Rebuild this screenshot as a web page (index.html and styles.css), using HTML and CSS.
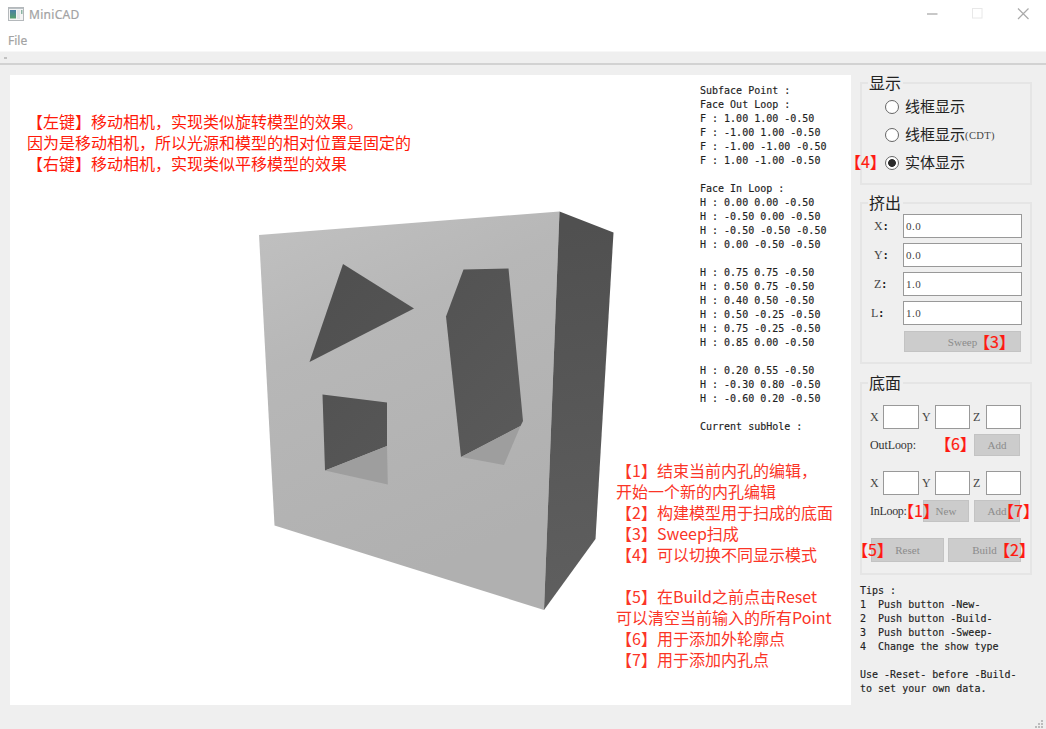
FILE: index.html
```html
<!DOCTYPE html>
<html lang="zh-CN">
<head>
<meta charset="utf-8">
<title>MiniCAD</title>
<link rel="stylesheet" href="styles.css">
</head>
<body>
<div class="window">
  <header class="titlebar">
    <svg class="app-icon" width="16" height="14" viewBox="0 0 16 14">
      <defs><linearGradient id="ico" x1="0" y1="0" x2="0" y2="1"><stop offset="0" stop-color="#4a7fa5"/><stop offset="1" stop-color="#55a06c"/></linearGradient></defs>
      <rect x=".5" y=".5" width="15" height="13" fill="#f4f4f4" stroke="#b4b8bb"/>
      <path d="M1 1.5h14" stroke="#b9c0c4"/>
      <rect x="2" y="3" width="6" height="8.500" fill="url(#ico)"/>
      <rect x="9" y="3" width="3" height="9" fill="#e2e5e7"/>
      <rect x="13" y="3" width="1.500" height="4" fill="#8bb5a4"/>
    </svg>
    <span class="app-name">MiniCAD</span>
    <svg class="controls" width="102" height="14" viewBox="0 0 102 14" fill="none">
      <path d="M0 7h10.500" stroke="#aaa" stroke-width="1.300"/>
      <rect x="45.500" y="1.500" width="9.500" height="9.500" stroke="#e8e8e8"/>
      <path d="M91 1.500l10.500 10.500M101.500 1.500L91 12" stroke="#aaa" stroke-width="1.200"/>
    </svg>
  </header>
  <nav class="menubar">File</nav>
  <div class="toolbar"><i class="handle"></i></div>
  <main class="main">
    <section class="viewport">
      <svg class="model" width="841" height="631" viewBox="10 75 841 631">
        <defs>
          <linearGradient id="front" gradientUnits="userSpaceOnUse" x1="270" y1="220" x2="430" y2="570"><stop offset="0" stop-color="#c0c0c0"/><stop offset=".35" stop-color="#b7b7b7"/><stop offset="1" stop-color="#b0b0b0"/></linearGradient>
          <linearGradient id="side" gradientUnits="userSpaceOnUse" x1="550" y1="230" x2="600" y2="580"><stop offset="0" stop-color="#505050"/><stop offset="1" stop-color="#5e5e5e"/></linearGradient>
          <linearGradient id="hole" gradientUnits="userSpaceOnUse" x1="320" y1="270" x2="510" y2="460"><stop offset="0" stop-color="#4f4f4f"/><stop offset="1" stop-color="#5a5a5a"/></linearGradient>
        </defs>
        <path fill="url(#front)" d="M259 235L559.500 211.500L544 610L274.500 525.500z"/>
        <path fill="url(#side)" d="M559.500 211.500L613.500 232.500L595.500 539L544 610z"/>
        <path fill="url(#hole)" d="M343 264L414 308.500L309.500 362z"/>
        <path fill="url(#hole)" d="M322.500 394.500L387 402.500L387 446L325 470.500z"/>
        <path fill="#9e9e9e" d="M325 470.500L387 446L387.800 484.500z"/>
        <path fill="url(#hole)" d="M463.500 269.500L508.500 268.500L523 421L520.500 426L461 457L446 316.500z"/>
        <path fill="#9e9e9e" d="M461 457L520.500 426L504 465z"/>
      </svg>
      <pre class="note note-mouse">【左键】移动相机，实现类似旋转模型的效果。
因为是移动相机，所以光源和模型的相对位置是固定的
【右键】移动相机，实现类似平移模型的效果</pre>
      <pre class="mono readout">Subface Point :
Face Out Loop :
F : 1.00 1.00 -0.50
F : -1.00 1.00 -0.50
F : -1.00 -1.00 -0.50
F : 1.00 -1.00 -0.50

Face In Loop :
H : 0.00 0.00 -0.50
H : -0.50 0.00 -0.50
H : -0.50 -0.50 -0.50
H : 0.00 -0.50 -0.50

H : 0.75 0.75 -0.50
H : 0.50 0.75 -0.50
H : 0.40 0.50 -0.50
H : 0.50 -0.25 -0.50
H : 0.75 -0.25 -0.50
H : 0.85 0.00 -0.50

H : 0.20 0.55 -0.50
H : -0.30 0.80 -0.50
H : -0.60 0.20 -0.50

Current subHole :</pre>
      <pre class="note note-legend">【1】结束当前内孔的编辑，
开始一个新的内孔编辑
【2】构建模型用于扫成的底面
【3】Sweep扫成
【4】可以切换不同显示模式

【5】在Build之前点击Reset
可以清空当前输入的所有Point
【6】用于添加外轮廓点
【7】用于添加内孔点</pre>
    </section>
    <aside class="panel">
      <section class="group group-display">
        <h2 class="group-title">显示</h2>
        <label class="radio"><i class="dot"></i><span class="radio-text">线框显示</span></label>
        <label class="radio"><i class="dot"></i><span class="radio-text">线框显示</span><small class="cdt">(CDT)</small></label>
        <label class="radio"><i class="dot dot-on"></i><span class="radio-text">实体显示</span></label>
        <span class="tag tag-4">【4】</span>
      </section>
      <section class="group group-extrude">
        <h2 class="group-title">挤出</h2>
        <div class="fields">
          <div class="field"><span class="axis">X<b>:</b></span><span class="input">0.0</span></div>
          <div class="field"><span class="axis">Y<b>:</b></span><span class="input">0.0</span></div>
          <div class="field"><span class="axis">Z<b>:</b></span><span class="input">1.0</span></div>
          <div class="field"><span class="axis axis-l">L<b>:</b></span><span class="input">1.0</span></div>
        </div>
        <div class="button button-sweep">Sweep</div>
        <span class="tag tag-3">【3】</span>
      </section>
      <section class="group group-base">
        <h2 class="group-title">底面</h2>
        <div class="coords"><span>X</span><i class="box"></i><span>Y</span><i class="box"></i><span>Z</span><i class="box"></i></div>
        <div class="loop"><span class="loop-name">OutLoop:</span><div class="button">Add</div></div>
        <div class="coords coords-in"><span>X</span><i class="box"></i><span>Y</span><i class="box"></i><span>Z</span><i class="box"></i></div>
        <div class="loop"><span class="loop-name loop-in">InLoop:</span><div class="button">New</div><div class="button">Add</div></div>
        <div class="actions"><div class="button">Reset</div><div class="button">Build</div></div>
        <span class="tag tag-6">【6】</span>
        <span class="tag tag-1">【1】</span>
        <span class="tag tag-7">【7】</span>
        <span class="tag tag-5">【5】</span>
        <span class="tag tag-2">【2】</span>
      </section>
      <pre class="mono tips">Tips :
1  Push button -New-
2  Push button -Build-
3  Push button -Sweep-
4  Change the show type

Use -Reset- before -Build-
to set your own data.</pre>
    </aside>
  </main>
  <footer class="status">
    <svg width="9" height="9" viewBox="0 0 9 9" fill="#bcbcbc"><path d="M6 0h2v2H6zM3 3h2v2H3zM6 3h2v2H6zM0 6h2v2H0zM3 6h2v2H3zM6 6h2v2H6z"/></svg>
  </footer>
</div>
</body>
</html>
```
FILE: styles.css
```css
* { box-sizing: border-box; }
body { margin: 0; }
pre, h2 { margin: 0; }
.window {
  width: 1046px; height: 729px; overflow: hidden;
  display: flex; flex-direction: column;
  background: #efefef;
  font-family: "Liberation Serif", "Noto Sans CJK SC", serif;
}
.titlebar {
  height: 28px; flex: none; background: #fff;
  display: flex; align-items: center; padding: 0 17px 0 8px;
}
.app-name, .menubar {
  font-family: "Noto Sans", sans-serif; font-size: 12px; color: #a3a3a3;
}
.app-name { margin-left: 5px; letter-spacing: .3px; -webkit-text-stroke: .2px #a3a3a3; }
.controls { margin-left: auto; }
.menubar { height: 24px; flex: none; background: #fff; border-bottom: 1px solid #f7f7f7; padding-left: 8px; line-height: 26px; -webkit-text-stroke: .2px #a3a3a3; }
.toolbar { height: 13px; flex: none; border-bottom: 2px solid #d2d2d2; padding: 5px 0 0 4px; }
.handle { display: block; width: 3px; height: 2px; background: #c2c2c2; }
.main { display: flex; gap: 9px; padding: 10px 14px 0 10px; height: 641px; flex: none; }
.viewport { width: 841px; height: 630px; background: #fff; position: relative; overflow: hidden; flex: none; }
.model { display: block; }

.note {
  position: absolute; color: #ff1a0a;
  font: 16px/21px "Noto Sans CJK SC", sans-serif;
}
.note-mouse { left: 17px; top: 36px; }
.note-legend { left: 606px; top: 385px; color: #fb3527; }
.mono { font: 10px/14px "DejaVu Sans Mono", monospace; color: #222; -webkit-text-stroke: .15px #222; }
.readout { position: absolute; left: 690px; top: 9px; }

.panel { width: 172px; flex: none; padding-top: 7px; }
.group { position: relative; border: 2px solid #e5e5e5; }
.group-title {
  width: 35px; height: 20px; margin: -12px 0 1px 6px; padding-left: 1px;
  background: #efefef; color: #222;
  font: 16px/20px "Noto Sans CJK SC", sans-serif;
}
.group-display { height: 103px; }
.group-extrude { height: 162px; margin-top: 17px; }
.group-base { height: 193px; margin-top: 18px; }

.radio {
  display: flex; align-items: center; height: 28px; margin-left: 23px;
  font: 15px/26px "Noto Sans CJK SC", sans-serif; color: #222;
}
.radio-text { padding-bottom: 2px; }
.dot {
  width: 14px; height: 14px; margin-right: 6px; border-radius: 50%;
  border: 1px solid #666; background: #fff; flex: none;
}
.dot-on { background: radial-gradient(circle, #2b2b2b 3.500px, #fff 4.300px); }
.cdt { font: 10.500px/12px "Liberation Serif", serif; letter-spacing: .4px; padding-top: 2px; color: #444; }

.fields { display: flex; flex-direction: column; gap: 5px; padding: 1px 0 0 12px; }
.field { display: flex; height: 24px; align-items: center; font-size: 12px; color: #444; }
.axis { width: 29px; }
.axis-l { margin-left: -3px; width: 32px; }
.axis b { color: #111; margin-left: 1px; }
.input {
  width: 119px; height: 24px; border: 1px solid #999; background: #fff;
  padding-left: 2px; font-size: 11px; line-height: 22px; letter-spacing: .5px;
}
.button {
  background: #ccc; border: 1px solid #c3c3c3; color: #8b8b8b;
  font-size: 11px; line-height: 20px; height: 22px; text-align: center;
}
.button-sweep { width: 117px; margin: 6px 0 0 42px; height: 21px; }

.coords {
  display: grid; grid-template-columns: 13px 36px 16px 35px 16px 35px;
  margin: 13px 0 0 8px; height: 24px; align-items: center; font-size: 12px; color: #444;
}
.group-title + .coords { margin-top: 13px; }
.coords span:nth-child(n+2) { padding-left: 3px; }
.coords-in { margin-top: 15px; }
.box { height: 24px; border: 1px solid #999; background: #fff; }
.loop { display: flex; gap: 5px; margin: 5px 10px 0 8px; height: 22px; align-items: center; }
.loop-name { margin-right: auto; font-size: 12px; color: #333; letter-spacing: -.1px; }
.loop-in { letter-spacing: -.3px; }
.loop .button { width: 46px; }
.actions { display: flex; gap: 4px; margin: 16px 9px 0 9px; }
.actions .button { flex: 1; height: 24px; line-height: 22px; }

.tag { position: absolute; white-space: nowrap; color: #ff1a10; font: 16px/20px "Noto Sans CJK SC", sans-serif; -webkit-text-stroke: .2px #ff1a10; }
.tag-4 { left: -17px; top: 67px; }
.tag-3 { left: 112px; top: 127px; }
.tag-6 { left: 73px; top: 49px; }
.tag-1 { left: 36px; top: 116px; }
.tag-7 { left: 136px; top: 116px; }
.tag-5 { left: -10px; top: 155px; }
.tag-2 { left: 132px; top: 155px; }

.tips { padding-top: 9px; }
.status { flex: 1; display: flex; justify-content: flex-end; align-items: flex-end; padding: 0 2px 0 0; }
```
